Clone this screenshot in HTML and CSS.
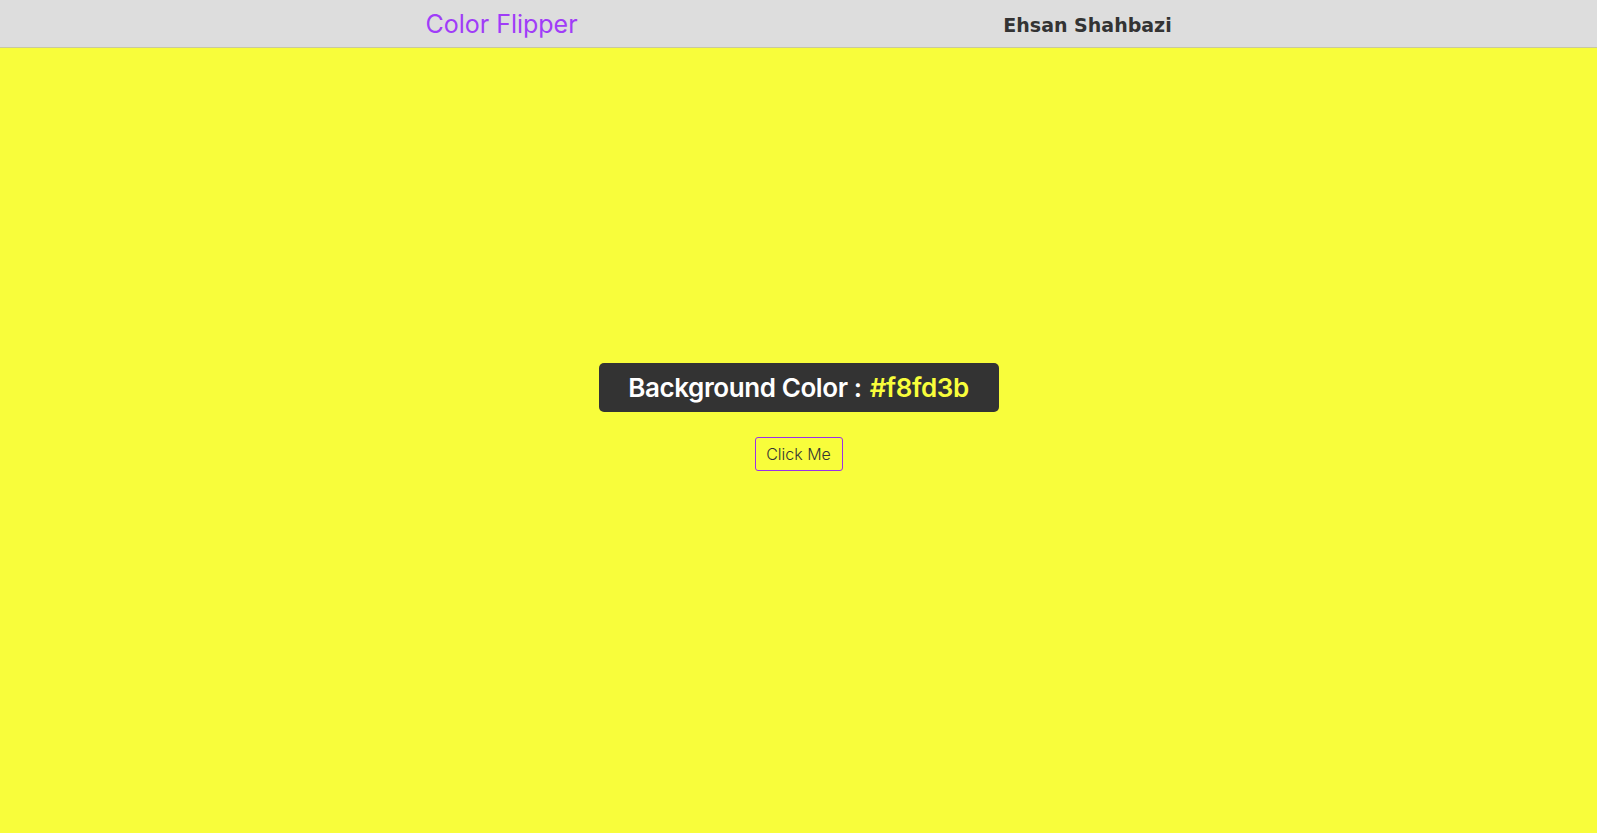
FILE: index.html
```html
<!DOCTYPE html>
<html lang="en">
<head>
<meta charset="utf-8">
<title>Color Flipper</title>
<link rel="stylesheet" href="styles.css">
</head>
<body>
<header class="topbar">
  <div class="topbar-inner">
    <h1 class="brand">Color Flipper</h1>
    <div class="author">Ehsan Shahbazi</div>
  </div>
</header>
<main class="stage">
  <h2 class="label">Background Color : <span class="hex">#f8fd3b</span></h2>
  <button class="flip-btn">Click Me</button>
</main>
</body>
</html>
```
FILE: styles.css
```css
* { box-sizing: border-box; }
html, body { margin: 0; padding: 0; }
body {
  background: #f8fd3b;
  font-family: "Inter", "Open Sans", sans-serif;
  min-height: 833px;
}
.topbar {
  background: #dddddd;
  height: 48px;
  border-bottom: 1px solid #c8c8a0;
}
.topbar-inner {
  width: 1180px;
  margin: 0 auto;
  padding-right: 8px;
  height: 47px;
  display: grid;
  grid-template-columns: 1fr 1fr;
  align-items: center;
}
.brand {
  margin: 0;
  text-align: center;
  font-weight: 400;
  font-size: 25px;
  color: #a03cf8;
  padding-top: 1px;
}
.author {
  text-align: center;
  font-family: "DejaVu Sans", sans-serif;
  font-weight: 700;
  font-size: 19px;
  color: #333333;
  padding-top: 2px;
}
.stage {
  display: flex;
  flex-direction: column;
  align-items: center;
  padding-top: 315px;
}
.label {
  margin: 0;
  background: #333333;
  color: #ffffff;
  border-radius: 5px;
  height: 49px;
  width: 400px;
  display: flex;
  align-items: center;
  justify-content: center;
  font-size: 26px;
  font-weight: 600;
  letter-spacing: -0.4px;
}
.hex { color: #f8fd3b; margin-left: 8px; }
.flip-btn {
  margin-top: 25px;
  width: 88px;
  height: 34px;
  background: transparent;
  border: 1px solid #9b30e8;
  border-radius: 3px;
  font-family: "Inter", sans-serif;
  font-weight: 300;
  font-size: 16px;
  color: #333333;
  padding: 0;
}
```
